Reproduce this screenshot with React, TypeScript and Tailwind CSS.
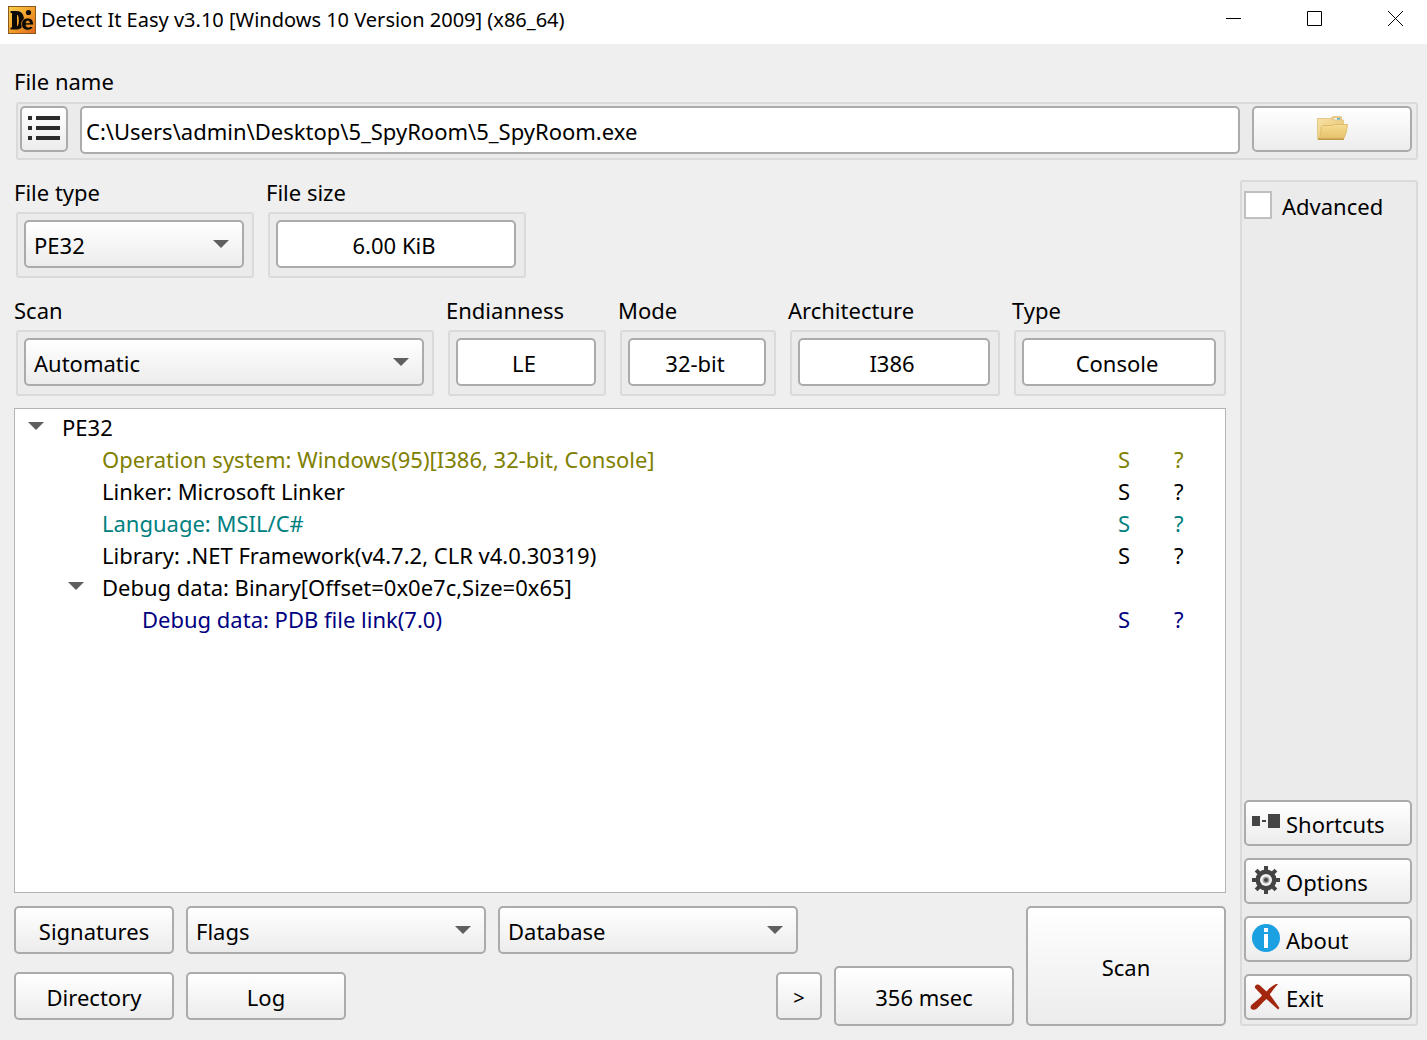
import { useState } from 'react';
import type { ButtonHTMLAttributes, ReactNode } from 'react';

const BORDER = 'rounded-[5px] border-2 border-[#ababab]';
const BUTTON = 'rounded-[5px] border-2 border-[#ababab] bg-linear-to-b from-white to-[#ececec] hover:to-[#f6f6f6]';
const FRAME = 'rounded-[3px] border-2 border-[#dadada] bg-[#ebebeb]';

function Arrow({ className = '' }: { className?: string }) {
  return (
    <svg viewBox="0 0 16 8" className={`h-2 w-4 fill-[#5f5f5f] ${className}`} aria-hidden="true">
      <path d="M0 0H16L8 8Z" />
    </svg>
  );
}

function Button({ className = '', children, ...rest }: ButtonHTMLAttributes<HTMLButtonElement> & { children: ReactNode }) {
  return (
    <button type="button" className={`${BUTTON} ${className}`} {...rest}>
      {children}
    </button>
  );
}

function Select({ id, label, options, className = '' }: { id: string; label?: string; options: string[]; className?: string }) {
  return (
    <div className={`relative ${className}`}>
      <select id={id} aria-label={label} className={`${BUTTON} block h-12 w-full appearance-none pt-0.5 pr-10 pl-2`}>
        {options.map((o) => (
          <option key={o}>{o}</option>
        ))}
      </select>
      <Arrow className="pointer-events-none absolute top-5 right-[15px]" />
    </div>
  );
}

function Group({ id, label, className = '', children }: { id: string; label: string; className?: string; children: ReactNode }) {
  return (
    <div className={`min-w-0 ${className}`}>
      <label htmlFor={id} className="-ml-0.5 block h-9 leading-8 whitespace-nowrap">
        {label}
      </label>
      <div className={`${FRAME} pt-1.5 pr-2 pb-2 pl-1.5`}>{children}</div>
    </div>
  );
}

function Value({ id, value }: { id: string; value: string }) {
  return <input id={id} readOnly defaultValue={value} className={`${BORDER} block h-12 w-full bg-white pt-0.5 pr-1 text-center`} />;
}

function Logo() {
  return (
    <svg viewBox="0 0 28 28" className="size-7 shrink-0" aria-hidden="true">
      <defs>
        <linearGradient id="logo-fill" x1="0" y1="0" x2="1" y2="1">
          <stop offset="0" stopColor="#f6d04a" />
          <stop offset="0.5" stopColor="#f2a02c" />
          <stop offset="1" stopColor="#e0641c" />
        </linearGradient>
      </defs>
      <rect x="0.5" y="0.5" width="27" height="27" fill="url(#logo-fill)" stroke="#8a5a1c" />
      <path
        fillRule="evenodd"
        fill="#0c0a06"
        d="M2.500 5H9C13.500 5 16 8.500 16 14C16 19.500 13.500 23.500 9 23.500H2.500V21.500H4V7H2.500ZM9 8.500V20.500C10.600 19.500 10.800 17 10.800 14.500C10.800 12 10.600 9.500 9 8.500Z"
      />
      <path
        fillRule="evenodd"
        fill="#0c0a06"
        stroke="#f09a2a"
        strokeWidth="0.800"
        d="M19.500 12C23.500 12 25.800 14.500 25.500 19H18C18.300 21.300 20.800 21.800 22.300 20.500H25.300C24.500 23 22.300 24.200 19.800 24.200C16 24.200 13.600 22 13.600 18.200C13.600 14.500 16 12 19.500 12ZM18 16.800H21.600C21.200 14.400 18.400 14.400 18 16.800Z"
      />
      <circle cx="20.500" cy="6.500" r="2.600" fill="#0c0a06" />
    </svg>
  );
}

function ListIcon() {
  return (
    <svg viewBox="0 0 32 28" className="h-7 w-8 fill-[#2b2b2b]" aria-hidden="true">
      <path d="M0 1H4V5H0ZM8 1H32V5H8ZM0 11H4V15H0ZM8 11H32V15H8ZM0 21H4V25H0ZM8 21H32V25H8Z" />
    </svg>
  );
}

function FolderIcon() {
  return (
    <svg viewBox="0 0 32 28" className="h-7 w-8" aria-hidden="true">
      <defs>
        <linearGradient id="folder-back" x1="0" y1="0" x2="1" y2="1">
          <stop offset="0" stopColor="#f7e3a4" />
          <stop offset="1" stopColor="#e3bf6c" />
        </linearGradient>
        <linearGradient id="folder-front" x1="0" y1="0" x2="0" y2="1">
          <stop offset="0" stopColor="#f6dc92" />
          <stop offset="1" stopColor="#e6c169" />
        </linearGradient>
      </defs>
      <path d="M15 4V2.500L17 1H25L26 2.500V5H15Z" fill="#e8c98a" />
      <path d="M18 3H24V5H18Z" fill="#f6f3e6" />
      <path d="M21 3H24V5H21Z" fill="#4fb7dc" />
      <path d="M1.500 3.500H15L17 5H27.500V24H1.500Z" fill="url(#folder-back)" stroke="#e3c88c" />
      <path d="M7 10.500H16L18 9.500H31.500L30 18L27.500 24H3.500L5.500 12Z" fill="url(#folder-front)" stroke="#e0bd6c" />
      <path d="M2 24.200H28" stroke="#c39a4a" strokeWidth="1.600" />
    </svg>
  );
}

function ShortcutsIcon() {
  return (
    <svg viewBox="0 0 28 28" className="size-7 shrink-0 fill-[#444]" aria-hidden="true">
      <path d="M0 8H8V18H0ZM10 12H14V14H10ZM16 6H28V20H16Z" />
    </svg>
  );
}

function OptionsIcon() {
  return (
    <svg viewBox="0 0 28 28" className="size-7 shrink-0" aria-hidden="true">
      <g fill="#444">
        {[0, 45, 90, 135].map((a) => (
          <rect key={a} x="12" y="0" width="4" height="28" transform={`rotate(${a} 14 14)`} />
        ))}
        <circle cx="14" cy="14" r="10.500" />
      </g>
      <circle cx="14" cy="14" r="6" fill="#f4f4f4" />
      <circle cx="14" cy="14" r="3.500" fill="#a5a5a5" />
      <circle cx="14" cy="14" r="2" fill="#444" />
    </svg>
  );
}

function AboutIcon() {
  return (
    <svg viewBox="0 0 28 28" className="size-7 shrink-0" aria-hidden="true">
      <circle cx="14" cy="14" r="14" fill="#1ba1e2" />
      <path d="M12 4H16V8H12ZM12 10H16V24H12Z" fill="#fff" />
    </svg>
  );
}

function ExitIcon() {
  return (
    <svg viewBox="0 0 28 28" className="size-7 shrink-0 overflow-visible" aria-hidden="true">
      <path
        fill="#a3260f"
        d="M3 4.500C4 2 6.500 2 8 3.500L14.500 9.500C17.500 6 20.500 3.500 24 2H26C23 5.500 20 9 17.800 12.500L27.500 26L26 27.500L14.500 17C11 20 8 23.500 5 26.500C2.500 28.500 -1 28 -1.500 25.500C-1.500 23 1 21.500 3 20C6 17.500 8.500 15.500 10 13.500C7.500 10.500 5 8 3 6Z"
      />
    </svg>
  );
}

const ROWS = [
  { text: 'PE32', level: 'pl-0', color: '', depth: 0, branch: 'root', flags: false },
  { text: 'Operation system: Windows(95)[I386, 32-bit, Console]', level: 'pl-10', color: 'text-[#808000]', depth: 1, flags: true },
  { text: 'Linker: Microsoft Linker', level: 'pl-10', color: '', depth: 1, flags: true },
  { text: 'Language: MSIL/C#', level: 'pl-10', color: 'text-[#008080]', depth: 1, flags: true },
  { text: 'Library: .NET Framework(v4.7.2, CLR v4.0.30319)', level: 'pl-10', color: '', depth: 1, flags: true },
  { text: 'Debug data: Binary[Offset=0x0e7c,Size=0x65]', level: 'pl-10', color: '', depth: 1, branch: 'debug', flags: false },
  { text: 'Debug data: PDB file link(7.0)', level: 'pl-20', color: 'text-[#000080]', depth: 2, flags: true },
];

function Results() {
  const [closed, setClosed] = useState<string[]>([]);
  const toggle = (b: string) => setClosed((c) => (c.includes(b) ? c.filter((x) => x !== b) : [...c, b]));
  const visible = ROWS.filter(
    (r) => r.depth === 0 || (!closed.includes('root') && (r.depth === 1 || !closed.includes('debug'))),
  );
  return (
    <div className="min-h-0 flex-1 border border-[#b4b4b4] bg-white pt-0.5">
      <table className="w-full table-fixed" aria-label="Scan results">
        <colgroup>
          <col />
          <col className="w-14" />
          <col className="w-[53px]" />
        </colgroup>
        <tbody>
          {visible.map((r) => (
            <tr key={r.text} className={`h-8 leading-8 ${r.color}`}>
              <td className={`p-0 whitespace-nowrap ${r.level}`}>
                <div className="flex items-center">
                  <span className="flex w-[47px] shrink-0 pl-[13px]">
                    {r.branch && (
                      <button type="button" aria-label={`Toggle ${r.text}`} onClick={() => toggle(r.branch!)} className="pb-0.5">
                        <Arrow className={closed.includes(r.branch) ? '-rotate-90' : ''} />
                      </button>
                    )}
                  </span>
                  {r.text}
                </div>
              </td>
              <td className="p-0 pl-0.5">{r.flags && 'S'}</td>
              <td className="p-0 pl-0.5">{r.flags && '?'}</td>
            </tr>
          ))}
        </tbody>
      </table>
    </div>
  );
}

function SideButton({ icon, children }: { icon: ReactNode; children: ReactNode }) {
  return (
    <Button className="flex h-[46px] items-center gap-1.5 pl-1.5">
      <span className="-mt-0.5">{icon}</span>
      <span className="pt-0.5">{children}</span>
    </Button>
  );
}

export default function App() {
  return (
    <div className="flex min-h-screen flex-col bg-[#efefef] font-['Noto_Sans',sans-serif] text-[22px] leading-8 text-black">
      <header className="flex h-11 items-start justify-between bg-white pl-2">
        <div className="flex items-center gap-[5px] pt-1">
          <Logo />
          <h1 className="text-xl leading-8">Detect It Easy v3.10 [Windows 10 Version 2009] (x86_64)</h1>
        </div>
        <div className="flex gap-[17px]">
          <button type="button" aria-label="Minimize" className="grid h-[37px] w-16 place-items-center">
            <svg viewBox="0 0 15 15" className="size-[15px] stroke-black" fill="none" aria-hidden="true">
              <path d="M0 7.500H15" />
            </svg>
          </button>
          <button type="button" aria-label="Maximize" className="grid h-[37px] w-16 place-items-center">
            <svg viewBox="0 0 15 15" className="size-[15px] stroke-black" fill="none" aria-hidden="true">
              <path d="M0.500 0.500H14.500V14.500H0.500Z" />
            </svg>
          </button>
          <button type="button" aria-label="Close" className="grid h-[37px] w-16 place-items-center">
            <svg viewBox="0 0 15 15" className="size-[15px] stroke-black" fill="none" aria-hidden="true">
              <path d="M0 0L15 15M15 0L0 15" />
            </svg>
          </button>
        </div>
      </header>

      <main className="flex flex-1 flex-col pt-5 pr-[9px] pb-3.5 pl-4">
        <label htmlFor="file-name" className="-ml-0.5 h-[38px] leading-[34px]">
          File name
        </label>
        <div className={`${FRAME} flex h-[58px] items-start gap-3 py-0.5 pr-1 pl-0.5`}>
          <Button aria-label="Recent files" className="grid h-[46px] w-12 shrink-0 place-items-center">
            <ListIcon />
          </Button>
          <input
            id="file-name"
            defaultValue="C:\Users\admin\Desktop\5_SpyRoom\5_SpyRoom.exe"
            className={`${BORDER} h-12 min-w-0 flex-1 bg-white px-1 pt-0.5`}
          />
          <Button aria-label="Open file" className="grid h-[46px] w-40 shrink-0 place-items-center">
            <FolderIcon />
          </Button>
        </div>

        <div className="mt-5 flex flex-1 gap-3.5">
          <div className="-mt-1 flex min-w-0 flex-1 flex-col">
            <div className="flex gap-3.5">
              <Group id="file-type" label="File type" className="w-[238px]">
                <Select id="file-type" options={['PE32', 'Binary']} />
              </Group>
              <Group id="file-size" label="File size" className="w-[258px]">
                <Value id="file-size" value="6.00 KiB" />
              </Group>
            </div>
            <div className="mt-4 flex gap-3.5">
              <Group id="scan" label="Scan" className="flex-1">
                <Select id="scan" options={['Automatic', 'Nauz File Detector']} />
              </Group>
              <Group id="endianness" label="Endianness" className="w-[158px]">
                <Value id="endianness" value="LE" />
              </Group>
              <Group id="mode" label="Mode" className="w-[156px]">
                <Value id="mode" value="32-bit" />
              </Group>
              <Group id="architecture" label="Architecture" className="w-[210px]">
                <Value id="architecture" value="I386" />
              </Group>
              <Group id="type" label="Type" className="w-[212px]">
                <Value id="type" value="Console" />
              </Group>
            </div>

            <div className="mt-3 -ml-0.5 flex flex-1 flex-col">
              <Results />
              <div className="mt-[13px] flex justify-between gap-3">
                <div className="flex flex-col gap-[18px]">
                  <div className="flex gap-3">
                    <Button className="h-12 w-40 pt-0.5">Signatures</Button>
                    <Select id="flags" label="Flags" options={['Flags']} className="w-[300px]" />
                    <Select id="database" label="Database" options={['Database']} className="w-[300px]" />
                  </div>
                  <div className="flex gap-3">
                    <Button className="h-12 w-40 pt-0.5">Directory</Button>
                    <Button className="h-12 w-40 pt-0.5">Log</Button>
                  </div>
                </div>
                <div className="flex items-end gap-3">
                  <Button aria-label="More" className="mb-1.5 -ml-9 h-12 w-[46px] pt-1 text-xl">
                    &gt;
                  </Button>
                  <Button className="h-[60px] w-[180px] pt-0.5">356 msec</Button>
                  <Button className="h-[120px] w-[200px] pt-0.5">Scan</Button>
                </div>
              </div>
            </div>
          </div>

          <aside className={`${FRAME} flex w-[178px] shrink-0 flex-col justify-between pt-2 pr-1 pb-1 pl-0.5`}>
            <label className="flex items-center gap-2.5">
              <input type="checkbox" className="-mt-0.5 size-7 appearance-none border-2 border-[#c0c0c0] bg-white checked:bg-[#5f5f5f]" />
              Advanced
            </label>
            <div className="flex flex-col gap-3">
              <SideButton icon={<ShortcutsIcon />}>Shortcuts</SideButton>
              <SideButton icon={<OptionsIcon />}>Options</SideButton>
              <SideButton icon={<AboutIcon />}>About</SideButton>
              <SideButton icon={<ExitIcon />}>Exit</SideButton>
            </div>
          </aside>
        </div>
      </main>
    </div>
  );
}
